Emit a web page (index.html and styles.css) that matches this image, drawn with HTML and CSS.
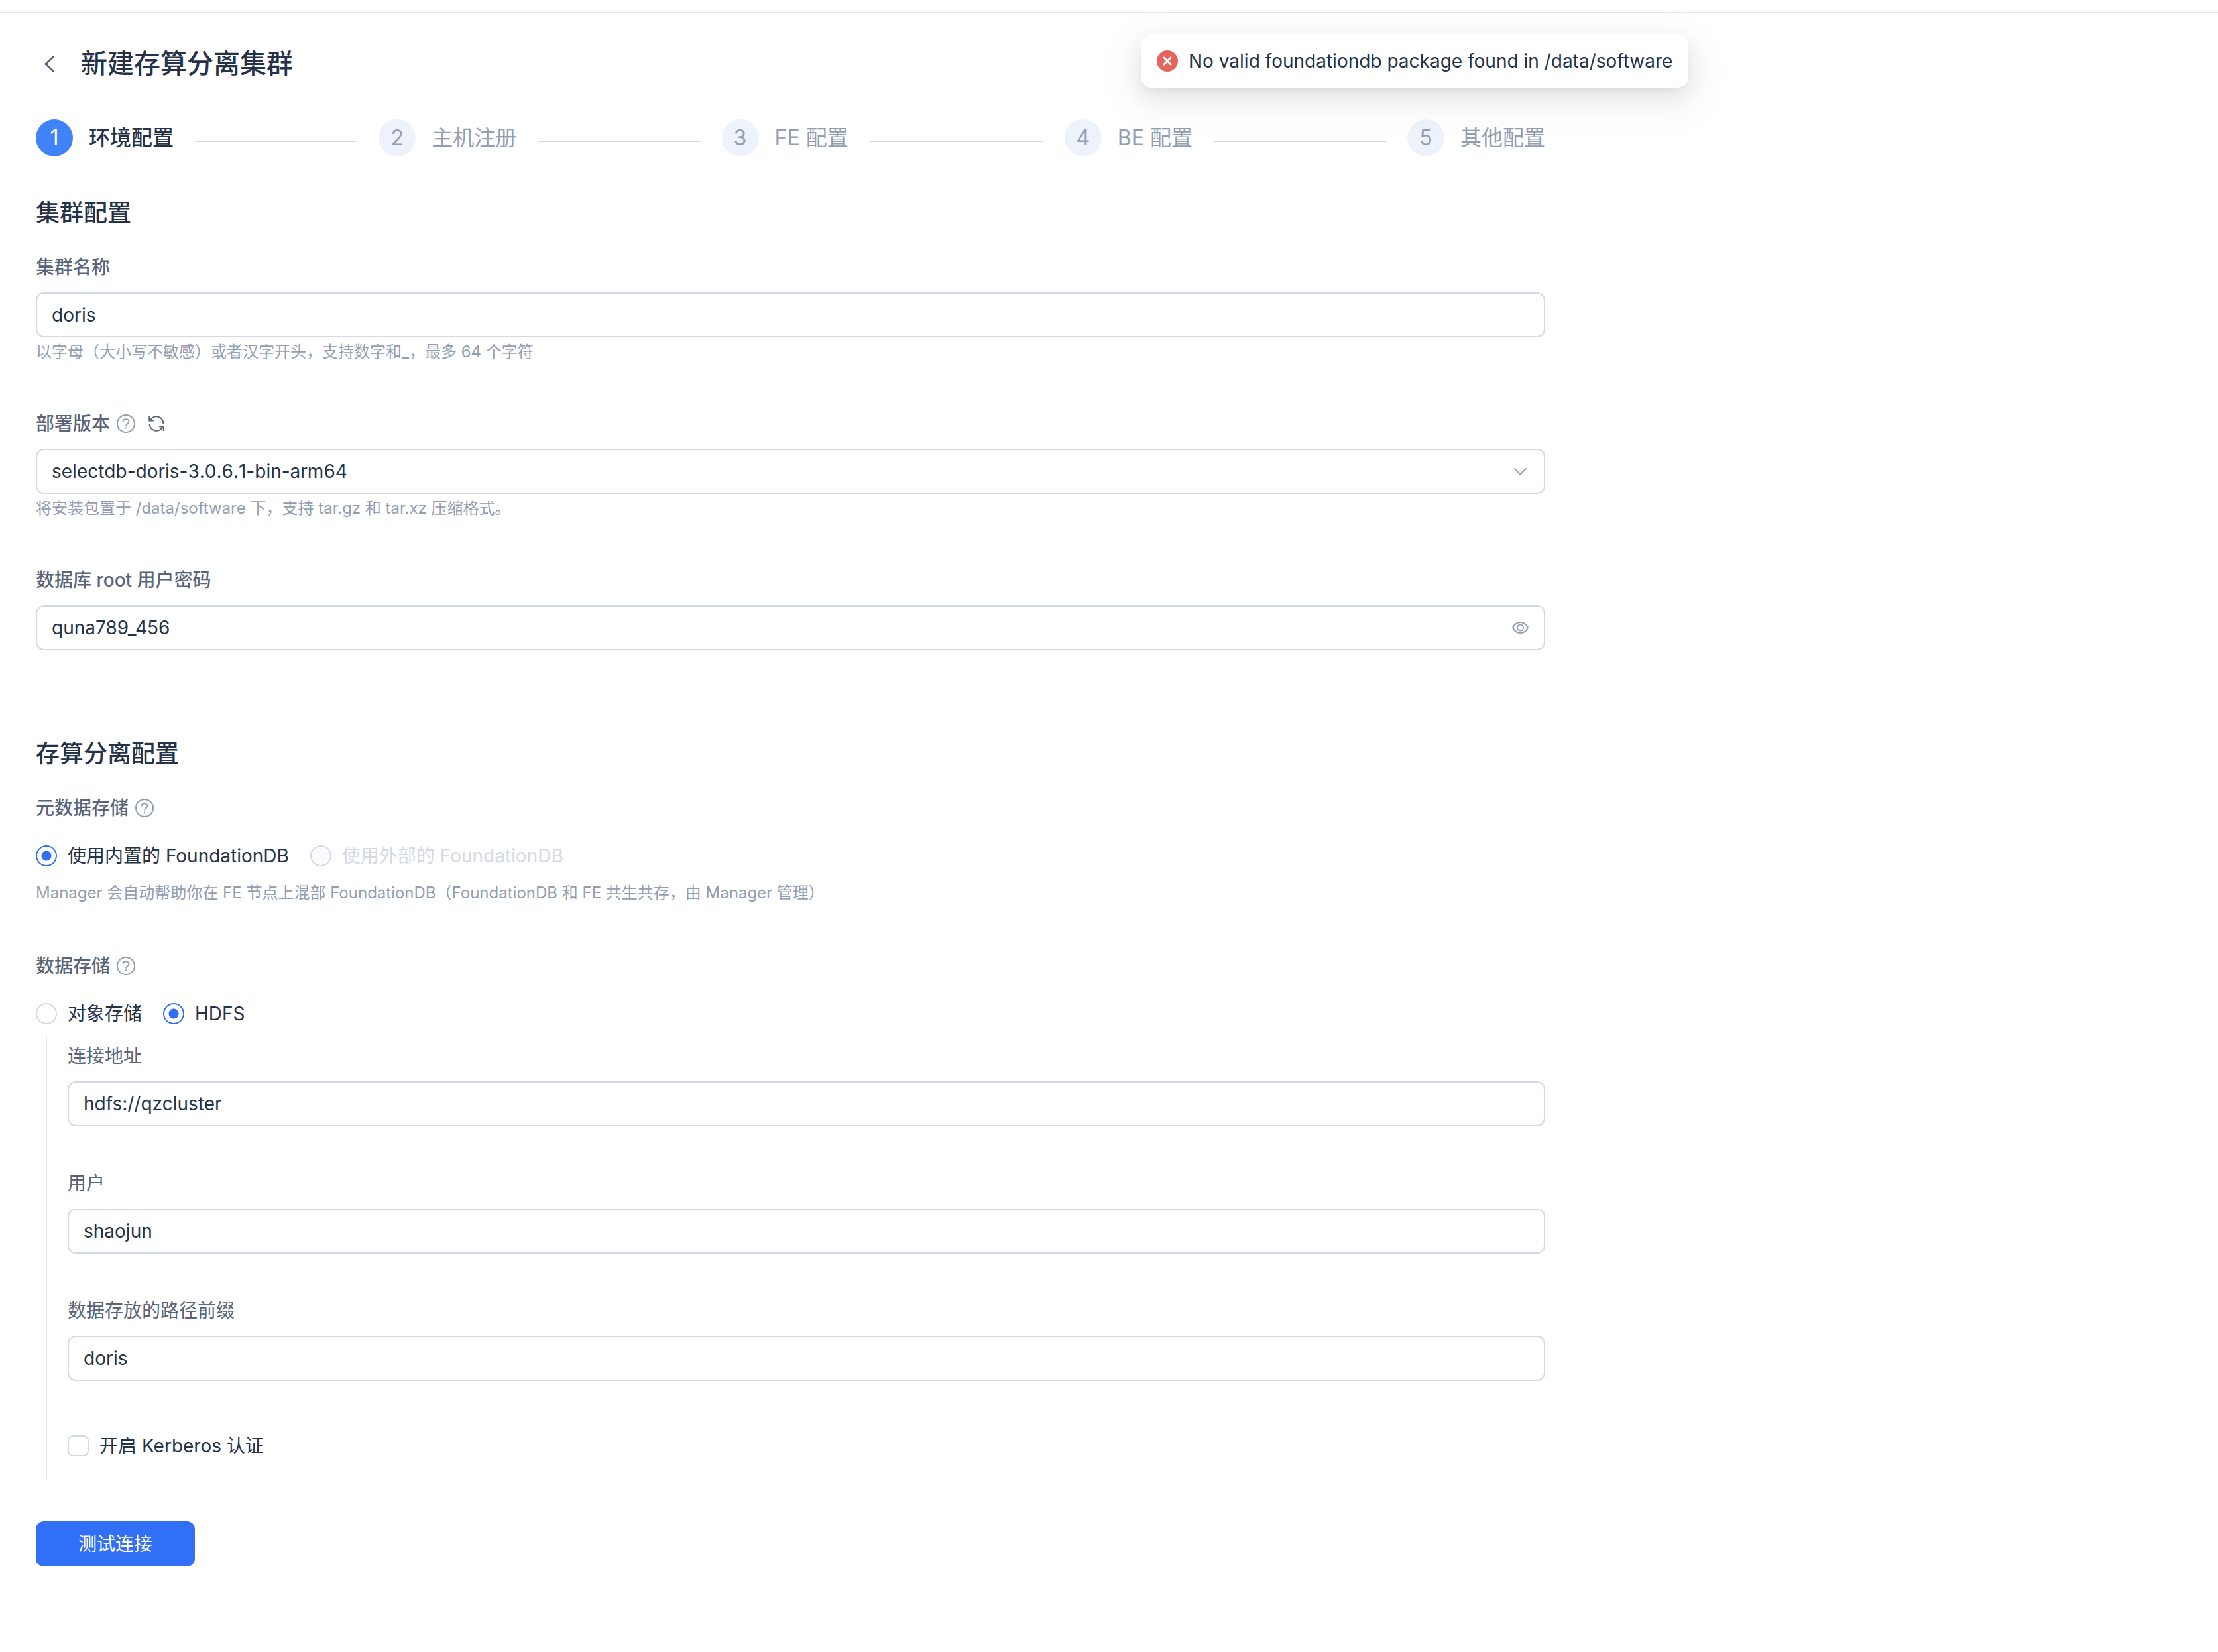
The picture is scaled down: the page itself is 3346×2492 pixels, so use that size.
FILE: index.html
```
<!DOCTYPE html>
<html lang="zh-CN">
<head>
  <meta charset="utf-8">
  <meta name="viewport" content="width=device-width, initial-scale=1">
  <title>新建存算分离集群</title>
  <link rel="stylesheet" href="styles.css">
</head>
<body>
  <svg class="sprite" aria-hidden="true">
    <symbol id="icon-help" viewBox="0 0 28 28">
      <circle cx="14" cy="14" r="13"/>
      <path d="M9.6 11.2C9.6 8.7 11.5 7.2 14 7.2s4.4 1.6 4.4 3.8c0 3.2-4.4 3.1-4.4 6.6"/>
      <path d="M14 19.6v1.8"/>
    </symbol>
  </svg>

  <div class="topbar"></div>

  <div class="toast" role="alert">
    <svg class="toast-icon" viewBox="0 0 32 32" aria-hidden="true">
      <circle cx="16" cy="16" r="16" fill="#e5665f"/>
      <path d="M11 11l10 10M21 11L11 21" fill="none" stroke="#fff" stroke-width="3" stroke-linecap="round"/>
    </svg>
    <span>No valid foundationdb package found in /data/software</span>
  </div>

  <main class="page">
    <header class="page-header">
      <button class="icon-button back" type="button" aria-label="返回">
        <svg viewBox="0 0 40 40" aria-hidden="true"><path d="M26 10L15 20.500 26 31"/></svg>
      </button>
      <h1 class="page-title">新建存算分离集群</h1>
    </header>

    <ol class="steps">
      <li class="step step-active" aria-current="step"><span class="step-number">1</span><span>环境配置</span></li>
      <li class="step"><span class="step-number">2</span><span>主机注册</span></li>
      <li class="step"><span class="step-number">3</span><span>FE 配置</span></li>
      <li class="step"><span class="step-number">4</span><span>BE 配置</span></li>
      <li class="step"><span class="step-number">5</span><span>其他配置</span></li>
    </ol>

    <form class="form">
      <section class="section">
        <h2 class="section-title">集群配置</h2>
        <div class="field">
          <div class="field-label"><label for="cluster-name">集群名称</label></div>
          <input class="control" id="cluster-name" type="text" value="doris">
          <p class="hint">以字母（大小写不敏感）或者汉字开头，支持数字和_，最多 64 个字符</p>
        </div>
        <div class="field">
          <div class="field-label">
            <label for="version">部署版本</label>
            <svg class="help" role="img" aria-label="帮助"><use href="#icon-help"/></svg>
            <button class="icon-button refresh" type="button" aria-label="刷新">
              <svg viewBox="0 0 28 28" aria-hidden="true">
                <path d="M3.300 3v6.500h6.500M4.400 9.500A10.500 10.500 0 0 1 24.500 14"/>
                <path d="M24.700 25v-6.500h-6.500M23.600 18.500A10.500 10.500 0 0 1 3.500 14"/>
              </svg>
            </button>
          </div>
          <div class="control-wrap">
            <select class="control" id="version">
              <option>selectdb-doris-3.0.6.1-bin-arm64</option>
            </select>
            <svg class="suffix" viewBox="0 0 28 28" aria-hidden="true"><path d="M6 10l8.500 8.500L23 10"/></svg>
          </div>
          <p class="hint">将安装包置于 /data/software 下，支持 tar.gz 和 tar.xz 压缩格式。</p>
        </div>
        <div class="field">
          <div class="field-label"><label for="password">数据库 root 用户密码</label></div>
          <div class="control-wrap">
            <input class="control" id="password" type="text" value="quna789_456">
            <svg class="suffix" viewBox="0 0 28 28" aria-hidden="true">
              <path d="M3 14C5.500 8.600 9.600 6 14.500 6S23.500 8.600 26 14c-2.500 5.400-6.600 8-11.500 8S5.500 19.400 3 14z"/>
              <circle cx="14.500" cy="14" r="4.500"/>
            </svg>
          </div>
        </div>
      </section>

      <section class="section">
        <h2 class="section-title">存算分离配置</h2>
        <div class="field choice-field" role="radiogroup" aria-labelledby="meta-label">
          <div class="field-label">
            <span id="meta-label">元数据存储</span>
            <svg class="help" role="img" aria-label="帮助"><use href="#icon-help"/></svg>
          </div>
          <div class="choices">
            <label class="choice"><input class="radio" type="radio" name="meta" checked>使用内置的 FoundationDB</label>
            <label class="choice choice-disabled"><input class="radio" type="radio" name="meta" disabled>使用外部的 FoundationDB</label>
          </div>
          <p class="hint">Manager 会自动帮助你在 FE 节点上混部 FoundationDB（FoundationDB 和 FE 共生共存，由 Manager 管理）</p>
        </div>
        <div class="field" role="radiogroup" aria-labelledby="data-label">
          <div class="field-label">
            <span id="data-label">数据存储</span>
            <svg class="help" role="img" aria-label="帮助"><use href="#icon-help"/></svg>
          </div>
          <div class="choices">
            <label class="choice"><input class="radio" type="radio" name="data">对象存储</label>
            <label class="choice"><input class="radio" type="radio" name="data" checked>HDFS</label>
          </div>
        </div>
        <div class="nested">
          <div class="field">
            <div class="field-label"><label for="hdfs-url">连接地址</label></div>
            <input class="control" id="hdfs-url" type="text" value="hdfs://qzcluster">
          </div>
          <div class="field">
            <div class="field-label"><label for="hdfs-user">用户</label></div>
            <input class="control" id="hdfs-user" type="text" value="shaojun">
          </div>
          <div class="field">
            <div class="field-label"><label for="hdfs-prefix">数据存放的路径前缀</label></div>
            <input class="control" id="hdfs-prefix" type="text" value="doris">
          </div>
          <div class="choices">
            <label class="choice"><input class="checkbox" type="checkbox">开启 Kerberos 认证</label>
          </div>
        </div>
      </section>

      <button class="submit" type="button">测试连接</button>
    </form>
  </main>
</body>
</html>
```
FILE: styles.css
```
:root {
  --text: #253247;
  --text-label: #5a6579;
  --text-muted: #949eb3;
  --border: #d3d9e8;
  --primary: #306ff6;
}

* {
  box-sizing: border-box;
}

body {
  margin: 0;
  background: #fff;
  color: var(--text);
  font-family: Inter, "Noto Sans CJK SC", sans-serif;
  font-size: 28px;
  line-height: 44px;
}

h1, h2, p, ol {
  margin: 0;
  padding: 0;
}

button, input, select {
  margin: 0;
  font: inherit;
  color: inherit;
}

.sprite {
  display: none;
}

.topbar {
  height: 20px;
  border-bottom: 2px solid #e5e5e5;
}

.toast {
  position: absolute;
  top: 52px;
  left: 1721px;
  display: flex;
  align-items: center;
  gap: 16px;
  height: 80px;
  padding: 0 24px;
  border-radius: 16px;
  background: #fff;
  white-space: nowrap;
  box-shadow:
    0 12px 32px rgba(0, 0, 0, 0.08),
    0 6px 12px -8px rgba(0, 0, 0, 0.12),
    0 18px 56px 16px rgba(0, 0, 0, 0.05);
}

.toast-icon {
  width: 32px;
  height: 32px;
}

.page {
  max-width: 2385px;
  padding: 48px 54px 128px;
}

.page-header {
  display: flex;
  align-items: center;
  gap: 28px;
}

.page-title {
  font-size: 40px;
  font-weight: 500;
  line-height: 56px;
}

.icon-button {
  display: block;
  padding: 0;
  border: 0;
  background: none;
  cursor: pointer;
}

.icon-button svg {
  display: block;
  width: 100%;
  height: 100%;
  fill: none;
  stroke: var(--text-label);
  stroke-width: 2;
}

.back {
  width: 40px;
  height: 40px;
}

.back svg {
  stroke-width: 3;
  stroke-linecap: round;
}

.refresh {
  width: 28px;
  height: 28px;
  margin-left: 8px;
}

.steps {
  display: flex;
  margin-top: 56px;
  list-style: none;
  font-size: 32px;
}

.step {
  display: flex;
  flex: 1;
  align-items: center;
  gap: 24px;
  color: var(--text-muted);
  white-space: nowrap;
}

.step:last-child {
  flex: none;
}

.step:not(:last-child)::after {
  content: "";
  flex: 1;
  height: 2px;
  margin: 10px 32px 0 8px;
  background: var(--border);
}

.step-number {
  width: 56px;
  border-radius: 50%;
  background: #eef2fb;
  line-height: 56px;
  text-align: center;
}

.step-active {
  color: var(--text);
  font-weight: 500;
}

.step-active .step-number {
  background: #4082f8;
  color: #fff;
  font-weight: 400;
}

.form {
  margin-top: 57px;
}

.section + .section {
  margin-top: 128px;
}

.section-title {
  margin-bottom: 32px;
  font-size: 36px;
  font-weight: 500;
  line-height: 56px;
}

.field + .field {
  margin-top: 64px;
}

.choice-field + .field {
  margin-top: 66px;
}

.field-label {
  display: flex;
  align-items: center;
  gap: 10px;
  margin-bottom: 16px;
  color: var(--text-label);
  font-weight: 500;
}

.help {
  width: 28px;
  height: 28px;
  fill: none;
  stroke: var(--text-muted);
  stroke-width: 2;
}

.control {
  display: block;
  width: 100%;
  height: 68px;
  padding: 0 22px;
  border: 2px solid var(--border);
  border-radius: 12px;
  background: #fff;
  appearance: none;
}

select.control {
  font-kerning: none;
}

.control-wrap {
  position: relative;
}

.suffix {
  position: absolute;
  top: 20px;
  right: 24px;
  width: 28px;
  height: 28px;
  fill: none;
  stroke: var(--text-muted);
  stroke-width: 2;
  stroke-linecap: round;
  pointer-events: none;
}

.hint {
  color: var(--text-muted);
  font-size: 24px;
}

.choices {
  display: flex;
  align-items: center;
  gap: 32px;
  height: 68px;
}

.choice {
  display: flex;
  align-items: center;
  gap: 16px;
}

.choice-disabled {
  color: var(--border);
}

.radio,
.checkbox {
  width: 32px;
  height: 32px;
  border: 2px solid var(--border);
  border-radius: 50%;
  background: #fff;
  appearance: none;
}

.checkbox {
  border-radius: 8px;
}

.radio:checked {
  border-color: var(--primary);
  background: radial-gradient(circle, var(--primary) 7px, #fff 8px);
}

.radio:disabled {
  background: #f9fbfe;
}

.nested {
  margin-left: 16px;
  padding: 8px 0 16px 31px;
  border-left: 1px solid #e1e6f0;
}

.nested .field-label {
  font-weight: 400;
}

.nested .choices {
  margin-top: 64px;
}

.submit {
  display: block;
  width: 240px;
  height: 68px;
  margin-top: 64px;
  border: 0;
  border-radius: 12px;
  background: var(--primary);
  color: #fff;
  cursor: pointer;
}
```
